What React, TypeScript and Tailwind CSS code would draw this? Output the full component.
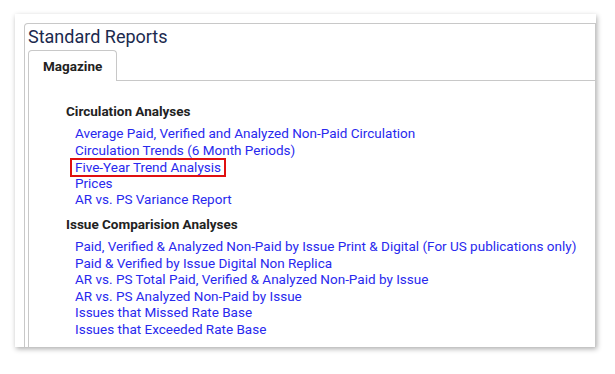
const circulation = [
  'Average Paid, Verified and Analyzed Non-Paid Circulation',
  'Circulation Trends (6 Month Periods)',
  'Five-Year Trend Analysis',
  'Prices',
  'AR vs. PS Variance Report',
];

const issues = [
  'Paid, Verified & Analyzed Non-Paid by Issue Print & Digital (For US publications only)',
  'Paid & Verified by Issue Digital Non Replica',
  'AR vs. PS Total Paid, Verified & Analyzed Non-Paid by Issue',
  'AR vs. PS Analyzed Non-Paid by Issue',
  'Issues that Missed Rate Base',
  'Issues that Exceeded Rate Base',
];

function ReportGroup({ title, links, highlight }: { title: string; links: string[]; highlight?: string }) {
  return (
    <div>
      <div className="text-[13.5px] font-bold leading-[16px] text-[#222]">{title}</div>
      <div className="mt-[6px] pl-[9px]">
        {links.map((l) => (
          <div key={l} className="h-[16.6px] text-[13.5px] leading-[16.6px] text-[#2929ee] whitespace-nowrap">
            {l === highlight ? (
              <span className="-ml-[5px] inline-block border-2 border-[#e01010] px-[3px] leading-[14.6px]">{l}</span>
            ) : (
              <span className="cursor-pointer">{l}</span>
            )}
          </div>
        ))}
      </div>
    </div>
  );
}

export default function App() {
  return (
    <div className="h-[374px] w-[615px] overflow-hidden bg-white pt-[14px] pl-[15px]" style={{ fontFamily: 'Roboto, "Liberation Sans", sans-serif' }}>
      <div className="h-[333px] w-[581px] overflow-hidden bg-white pl-[9px] pt-[9px] shadow-[1px_2px_5px_rgba(0,0,0,0.32)]">
        <div className="h-[400px] rounded-tl-[4px] border-l border-r border-t border-[#c8c8c8] pl-[3px]">
          <div className="pt-[2px] text-[18px] leading-[22px] text-[#1b2a4e]">Standard Reports</div>
          <div className="mt-[2px] flex">
            <div className="relative z-10 -mb-px flex h-[31px] w-[89px] items-center rounded-t-[4px] border-l border-r border-t border-[#c8c8c8] bg-white pl-[14px] text-[13.5px] font-bold text-[#222]">
              Magazine
            </div>
          </div>
          <div className="h-[300px] border-l border-t border-[#c8c8c8] pl-[37px] pt-[22px]">
            <ReportGroup title="Circulation Analyses" links={circulation} highlight="Five-Year Trend Analysis" />
            <div className="mt-[8px]">
              <ReportGroup title="Issue Comparision Analyses" links={issues} />
            </div>
          </div>
        </div>
      </div>
    </div>
  );
}
